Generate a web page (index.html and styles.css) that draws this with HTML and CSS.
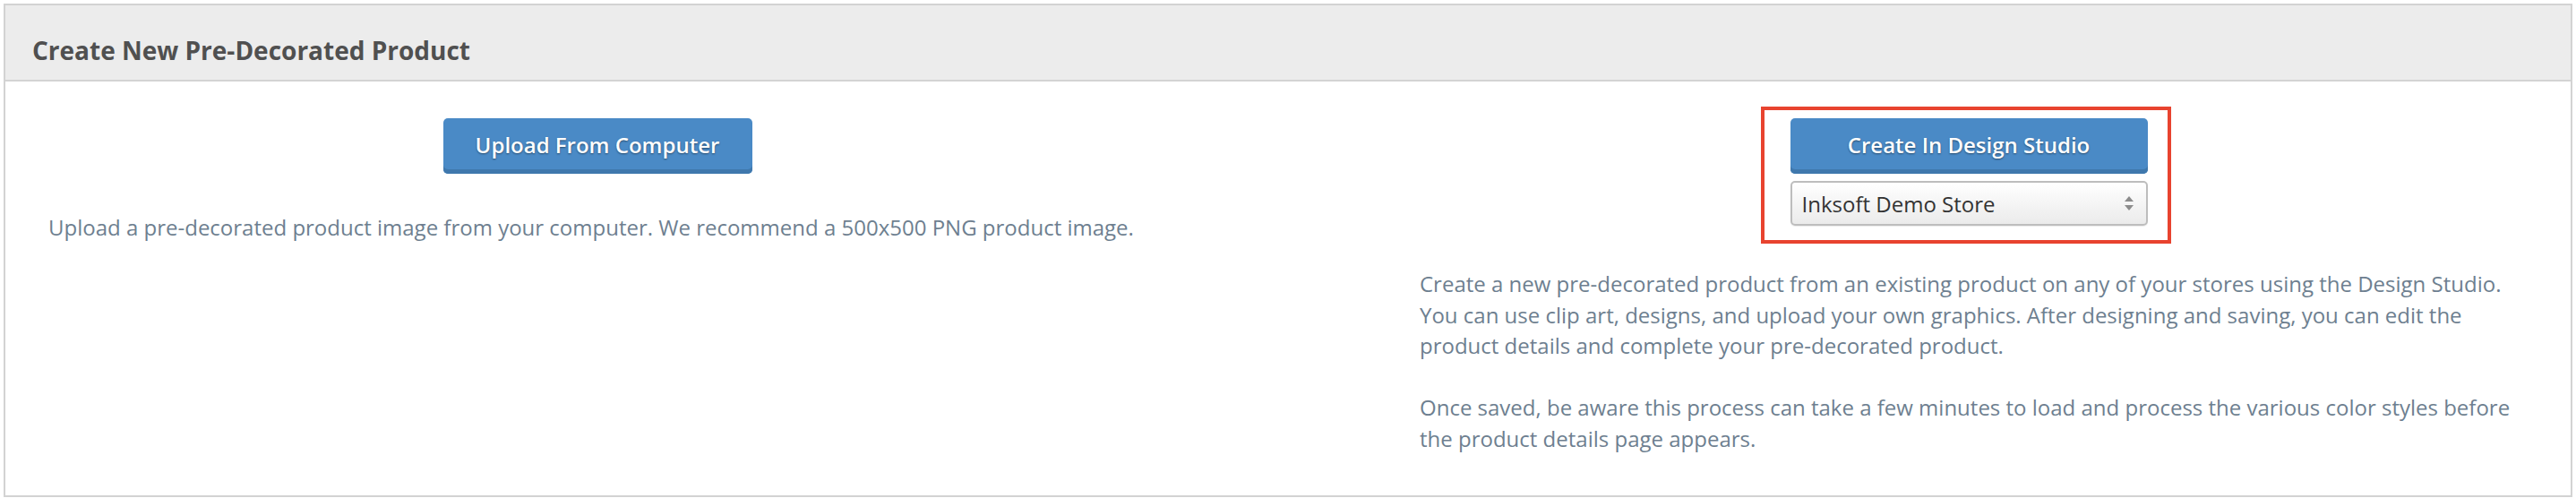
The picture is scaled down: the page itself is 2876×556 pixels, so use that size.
FILE: index.html
```html
<!DOCTYPE html>
<html>
<head>
<meta charset="utf-8">
<title>Create New Pre-Decorated Product</title>
<link rel="stylesheet" href="styles.css">
</head>
<body>
<section class="panel">
  <header class="panel-head">
    <h2 class="panel-title">Create New Pre-Decorated Product</h2>
  </header>
  <div class="panel-body">
    <div class="col">
      <div class="actions">
        <button class="btn btn-upload" type="button">Upload From Computer</button>
      </div>
      <p class="desc desc-left">Upload a pre-decorated product image from your computer. We recommend a 500x500 PNG product image.</p>
    </div>
    <div class="col">
      <div class="actions">
        <div class="studio-group">
          <button class="btn btn-studio" type="button">Create In Design Studio</button>
          <div class="select">
            <span class="select-label">Inksoft Demo Store</span>
            <svg class="select-arrows" width="12" height="18" viewBox="0 0 12 18" aria-hidden="true">
              <path d="M6 1 L11 7 L1 7 Z" fill="#8c8c8c"/>
              <path d="M6 17 L11 11 L1 11 Z" fill="#8c8c8c"/>
            </svg>
          </div>
        </div>
      </div>
      <p class="desc desc-right">Create a new pre-decorated product from an existing product on any of your stores using the Design Studio. You can use clip art, designs, and upload your own graphics. After designing and saving, you can edit the product details and complete your pre-decorated product.</p>
      <p class="desc desc-next">Once saved, be aware this process can take a few minutes to load and process the various color styles before the product details page appears.</p>
    </div>
  </div>
</section>
</body>
</html>
```

FILE: styles.css
```css
html, body {
  margin: 0;
  padding: 0;
  background: #ffffff;
}

body {
  padding: 4px 4px 0 4px;
  font-family: "Open Sans", "Liberation Sans", sans-serif;
}

.panel {
  box-sizing: border-box;
  height: 551px;
  border: 2px solid #d3d3d3;
  background: #ffffff;
  display: flex;
  flex-direction: column;
}

.panel-head {
  box-sizing: border-box;
  height: 85px;
  background: #ececec;
  border-bottom: 2px solid #d3d3d3;
  padding: 36px 0 0 30px;
}

.panel-title {
  margin: 0;
  font-size: 28px;
  font-weight: 700;
  color: #505050;
  line-height: 1;
}

.panel-body {
  display: grid;
  grid-template-columns: 1226px 1226px;
  column-gap: 305px;
  padding: 41px 0 0 48px;
}

.col {
  display: flex;
  flex-direction: column;
}

.actions {
  display: flex;
  justify-content: center;
}

.btn {
  box-sizing: border-box;
  height: 62px;
  border: 0;
  border-radius: 5px;
  background: #4a8ac6;
  box-shadow: inset 0 -5px 0 #3f78ad;
  color: #ffffff;
  font-family: "Open Sans", "Liberation Sans", sans-serif;
  font-size: 24px;
  font-weight: 600;
  text-shadow: 0 1px 2px rgba(0, 0, 0, 0.45);
  padding: 0 0 3px 0;
  cursor: pointer;
}

.btn-upload {
  width: 345px;
}

.btn-studio {
  width: 399px;
}

.studio-group {
  position: relative;
  display: flex;
  flex-direction: column;
  gap: 8px;
}

.studio-group::before {
  content: "";
  position: absolute;
  top: -13px;
  left: -33px;
  right: -26px;
  bottom: -20px;
  border: 4px solid #e8432f;
  pointer-events: none;
}

.select {
  box-sizing: border-box;
  width: 399px;
  height: 50px;
  border: 2px solid #bdbdbd;
  border-radius: 5px;
  background: linear-gradient(#ffffff, #ebebeb);
  box-shadow: 0 1px 1px rgba(0, 0, 0, 0.08);
  display: flex;
  align-items: center;
  justify-content: space-between;
  padding: 0 13px 0 11px;
}

.select-label {
  font-size: 24px;
  color: #333333;
}

.select-arrows {
  display: block;
}

.desc {
  margin: 0;
  font-size: 24px;
  line-height: 34.5px;
  color: #6e7f90;
}

.desc-left {
  margin-top: 43px;
}

.desc-right {
  margin-top: 48px;
}

.desc-next {
  margin-top: 34.5px;
}
```
